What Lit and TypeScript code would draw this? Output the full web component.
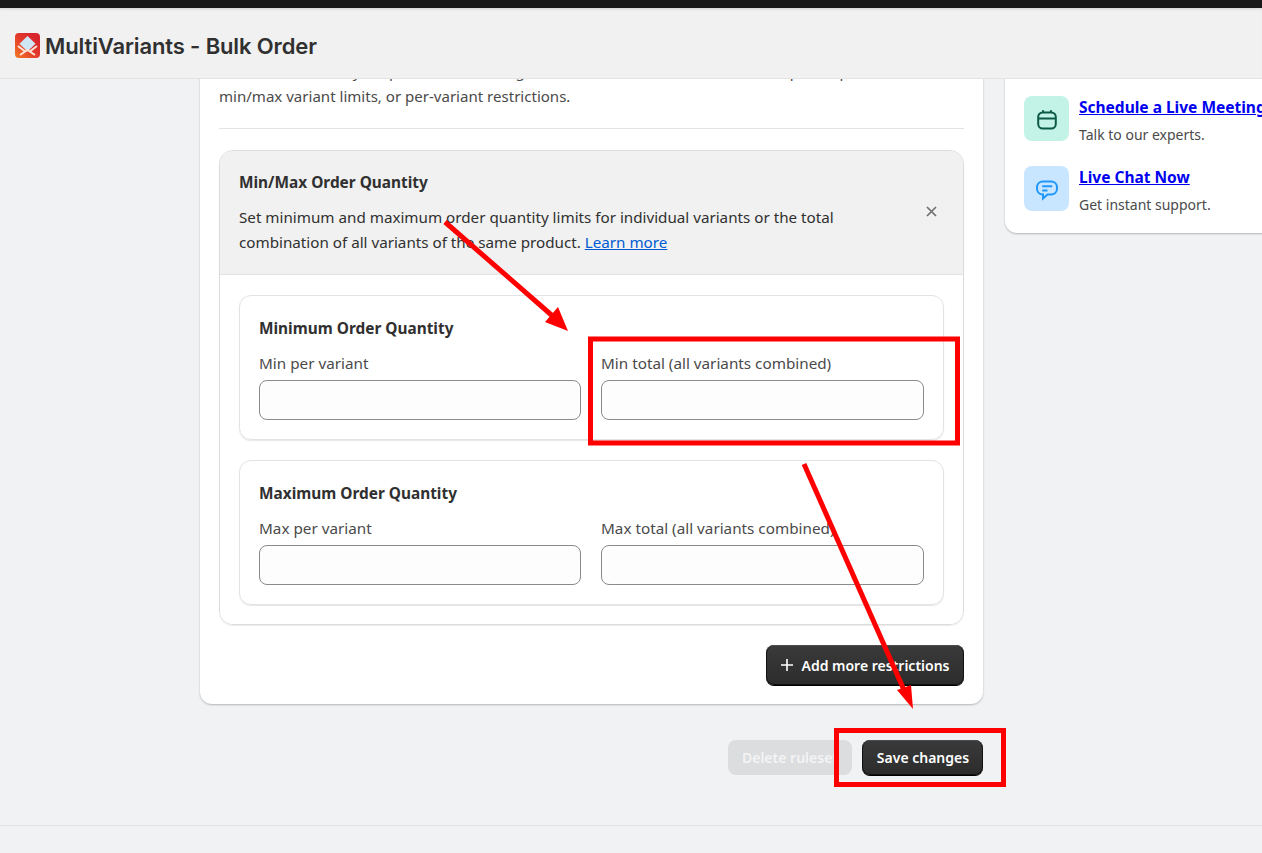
import { LitElement, html, css, svg } from "lit";
import { customElement } from "lit/decorators.js";

const field = (label: string) => html`<label class="field"><span class="flabel">${label}</span><input class="inp" type="text" /></label>`;

@customElement("app-root")
export class AppRoot extends LitElement {
  static styles = css`
    :host { display: block; position: relative; width: 1262px; height: 853px; overflow: hidden; background: #f1f2f4; font-family: "Noto Sans", "Open Sans", sans-serif; color: #303030; font-size: 14px; }
    * { box-sizing: border-box; }
    .topbar { height: 8px; background: #1a1a1a; }
    .header { position: relative; z-index: 2; height: 71px; background: #f1f1f1; border-bottom: 1px solid #e3e3e3; display: flex; align-items: center; gap: 5px; padding: 5px 0 0 15px; box-shadow: inset 0 3px 3px -2px rgba(0,0,0,.12); }
    .logo { width: 25px; height: 25px; display: block; }
    .title { font-family: Inter, sans-serif; font-size: 22px; font-weight: 600; letter-spacing: -0.12px; color: #303030; }
    .page { height: 774px; display: flex; align-items: flex-start; padding-left: 200px; gap: 22px; overflow: hidden; }
    .col { width: 783px; flex: none; display: flex; flex-direction: column; margin-top: -40px; }
    .card { background: #fff; border-radius: 12px; box-shadow: 0 1px 2px rgba(0,0,0,.25); padding: 20px 19px 19px; display: flex; flex-direction: column; }
    .intro { margin: 0; font-size: 15.05px; line-height: 25px; color: #4a4a4a; white-space: nowrap; }
    .rule { height: 1px; background: #e3e3e3; margin: 19px 0 21px; }
    .rule-card { border: 1px solid #dcdcdc; border-radius: 14px; overflow: hidden; box-shadow: 0 1px 1px rgba(0,0,0,.08); }
    .rc-head { background: #f1f1f1; height: 124px; padding: 22px 19px 0; position: relative; border-bottom: 1px solid #e3e3e3; }
    .rc-title { font-weight: 700; font-size: 15.4px; line-height: 20px; color: #303030; }
    .rc-desc { margin: 12px 0 0; line-height: 25px; font-size: 15.2px; color: #303030; white-space: nowrap; }
    .rc-desc a { color: #005bd3; }
    .close { position: absolute; right: 25px; top: 54px; width: 13px; height: 13px; }
    .rc-body { padding: 20px 19px 19px; display: flex; flex-direction: column; gap: 20px; background: #fff; }
    .sub { border: 1px solid #e3e3e3; border-radius: 12px; box-shadow: 0 1px 1px rgba(0,0,0,.1); padding: 23px 19px 19px; }
    .sub-title { font-weight: 700; font-size: 15.4px; line-height: 20px; color: #303030; }
    .row { display: grid; grid-template-columns: 322px 323px; gap: 20px; margin-top: 14px; }
    .field { display: flex; flex-direction: column; }
    .flabel { font-size: 15.25px; line-height: 20px; margin-bottom: 7px; color: #4a4a4a; }
    .inp { height: 40px; width: 100%; border: 1px solid #8a8a8a; border-radius: 8px; background: #fdfdfd; display: block; }
    .actions { display: flex; justify-content: flex-end; margin-top: 20px; }
    .btn { height: 40px; border: none; border-radius: 8px; color: #fff; font: 600 14px "Noto Sans", sans-serif; background: linear-gradient(#3a3a3a, #2c2c2c); box-shadow: inset 0 1px 0 rgba(255,255,255,.25), 0 0 0 1px #111 inset, 0 1px 0 #000; display: inline-flex; align-items: center; justify-content: center; }
    .add { width: 198px; gap: 7px; }
    .footer-actions { display: flex; justify-content: flex-end; gap: 10px; margin-top: 36px; }
    .save { width: 121px; height: 35px; padding: 0 0 0 1px; }
    .delete { width: 124px; height: 35px; border: none; border-radius: 8px; background: #dcdddf; color: #f4f4f5; font: 600 14px "Noto Sans", sans-serif; display: inline-flex; align-items: center; justify-content: center; }
    .side { flex: none; width: 300px; margin-top: -60px; background: #fff; border-radius: 12px; box-shadow: 0 1px 2px rgba(0,0,0,.25); padding: 77px 19px 22px; display: flex; flex-direction: column; gap: 25px; }
    .help { display: flex; gap: 10px; align-items: flex-start; height: 45px; }
    .tile { width: 45px; height: 45px; border-radius: 8px; display: flex; align-items: center; justify-content: center; flex: none; }
    .tile.green { background: #c2f3e6; }
    .tile.blue { background: #c8e6ff; }
    .help-text { padding-top: 1px; }
    .help a { display: block; color: #0000ee; font-weight: 700; font-size: 15.5px; line-height: 20px; white-space: nowrap; }
    .help p { margin: 8px 0 0; font-size: 14px; line-height: 20px; color: #4a4a4a; }
    .bottom-line { position: absolute; left: 0; right: 0; top: 825px; height: 1px; background: #e3e3e3; }
    .marks { position: absolute; inset: 0; z-index: 5; pointer-events: none; }
  `;

  render() {
    return html`
      <div class="topbar"></div>
      <header class="header">
        <svg class="logo" viewBox="0 0 25 25">
          <defs><linearGradient id="lg" x1="0" y1="1" x2="0.8" y2="0.2"><stop offset="0" stop-color="#f47a22"/><stop offset="0.6" stop-color="#e33a2c"/><stop offset="1" stop-color="#d9262c"/></linearGradient></defs>
          <rect width="25" height="25" rx="4" fill="url(#lg)"/>
          <path d="M12.5 3 L20.5 10.8 L12.5 18.5 L4.5 10.8Z" fill="#cfe6f6"/>
          <path d="M3 13 L9.5 18 M22 13 L15.5 18 M5 22 L12.5 17 L20 22" stroke="#fbe3d6" stroke-width="2" fill="none"/>
        </svg>
        <span class="title">MultiVariants - Bulk Order</span>
      </header>
      <div class="page">
        <div class="col">
          <section class="card">
            <p class="intro">Add restrictions to your products, including total order limits, and minimums, step multiples,<br />min/max variant limits, or per-variant restrictions.</p>
            <div class="rule"></div>
            <div class="rule-card">
              <div class="rc-head">
                <div class="rc-title">Min/Max Order Quantity</div>
                <p class="rc-desc">Set minimum and maximum order quantity limits for individual variants or the total<br />combination of all variants of the same product. <a href="#">Learn more</a></p>
                <svg class="close" viewBox="0 0 13 13"><path d="M2 2 L11 11 M11 2 L2 11" stroke="#707070" stroke-width="1.7" fill="none"/></svg>
              </div>
              <div class="rc-body">
                <div class="sub">
                  <div class="sub-title">Minimum Order Quantity</div>
                  <div class="row">${field("Min per variant")}${field("Min total (all variants combined)")}</div>
                </div>
                <div class="sub">
                  <div class="sub-title">Maximum Order Quantity</div>
                  <div class="row">${field("Max per variant")}${field("Max total (all variants combined)")}</div>
                </div>
              </div>
            </div>
            <div class="actions">
              <button class="btn add"><svg width="14" height="14" viewBox="0 0 14 14"><path d="M7 1 V13 M1 7 H13" stroke="#fff" stroke-width="1.6"/></svg>Add more restrictions</button>
            </div>
          </section>
          <div class="footer-actions">
            <button class="delete">Delete ruleset</button>
            <button class="btn save">Save changes</button>
          </div>
        </div>
        <aside class="side">
          <div class="help">
            <div class="tile green"><svg width="24" height="24" viewBox="0 0 24 24" fill="none" stroke="#0b5a46" stroke-width="2"><rect x="3.2" y="5.5" width="17.6" height="16" rx="4.5"/><path d="M3.2 11.5 H20.8 M8 3.3 V5.5 M16 3.3 V5.5"/></svg></div>
            <div class="help-text"><a href="#">Schedule a Live Meeting</a><p>Talk to our experts.</p></div>
          </div>
          <div class="help">
            <div class="tile blue"><svg width="24" height="24" viewBox="0 0 24 24" fill="none" stroke="#1e96fc" stroke-width="2"><path d="M8 4.5 H16 C19.5 4.5 22 7 22 10.5 V11.5 C22 15 19.5 17.5 16 17.5 H12.5 L8 21.5 V17.5 C4.5 17.5 2 15 2 11.5 V10.5 C2 7 4.5 4.5 8 4.5Z"/><path d="M7.2 9.2 H17.2 M7.2 13.5 H12.5"/></svg></div>
            <div class="help-text"><a href="#">Live Chat Now</a><p>Get instant support.</p></div>
          </div>
        </aside>
      </div>
      <div class="bottom-line"></div>
      <svg class="marks" width="1262" height="853" viewBox="0 0 1262 853">
        ${svg`
          <rect x="590.5" y="339" width="367" height="104" fill="none" stroke="#ff0000" stroke-width="5"/>
          <rect x="836.5" y="730.5" width="167" height="54" fill="none" stroke="#ff0000" stroke-width="5"/>
          <path d="M445 222 L556 319" stroke="#ff0000" stroke-width="5" fill="none"/>
          <path d="M568 331 L545 322 L558 307Z" fill="#ff0000"/>
          <path d="M804 464 L904 690" stroke="#ff0000" stroke-width="5" fill="none"/>
          <path d="M913 709 L897 690 L911 685Z" fill="#ff0000"/>
        `}
      </svg>
    `;
  }
}
